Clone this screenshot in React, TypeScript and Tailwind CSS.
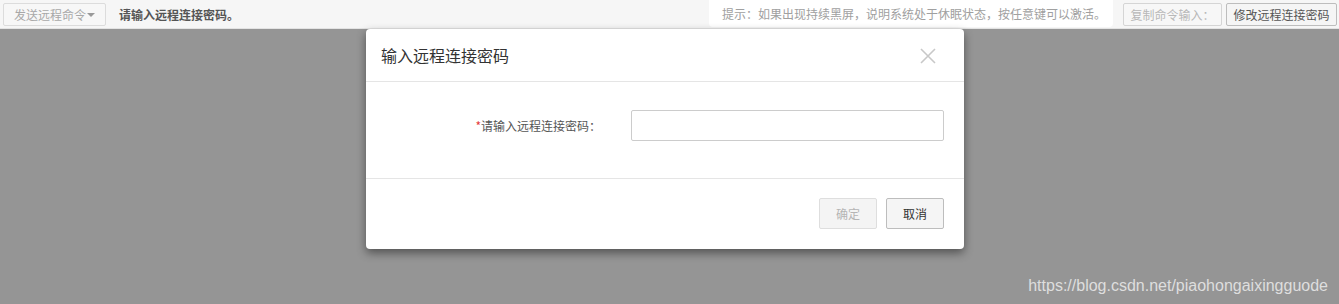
import React from "react";

const font = { fontFamily: '"Noto Sans CJK SC", "Noto Sans", sans-serif' };

export default function App() {
  return (
    <div className="relative flex h-[304px] w-full flex-col overflow-hidden bg-[#959595]" style={font}>
      <div className="flex h-[29px] items-start border-b border-[#e3e3e3] bg-[#f6f6f6]">
        <div className="ml-[3px] mt-[3px] flex h-[23px] w-[103px] items-center justify-center rounded-[2px] border border-[#dcdcdc] bg-[#f7f7f7] text-[12px] text-[#a8a8a8]">
          发送远程命令
          <span className="ml-[1px] inline-block h-0 w-0 border-x-[4px] border-t-[4px] border-x-transparent border-t-[#999]"></span>
        </div>
        <div className="ml-[13px] mt-[6px] text-[12px] font-bold leading-[17px] text-[#555]">请输入远程连接密码。</div>
        <div className="ml-auto flex h-[27px] w-[404px] items-center rounded-b-[4px] bg-white pl-[13px] text-[12px] text-[#a0a0a0]">
          提示：如果出现持续黑屏，说明系统处于休眠状态，按任意键可以激活。
        </div>
        <div className="ml-[10px] mt-[3px] flex h-[23px] w-[99px] items-center justify-center rounded-[2px] border border-[#d5d5d5] bg-[#f7f7f7] text-[12px] text-[#b8b8b8]">
          复制命令输入：
        </div>
        <div className="ml-[4px] mr-[2px] mt-[3px] flex h-[23px] w-[111px] items-center justify-center rounded-[2px] border border-[#bdbdbd] bg-[#f5f5f5] text-[12px] text-[#555]">
          修改远程连接密码
        </div>
      </div>
      <div className="flex-1"></div>

      <div className="absolute left-[366px] top-[29px] w-[598px] rounded-[4px] bg-white shadow-[0_4px_10px_rgba(0,0,0,0.45)]">
        <div className="flex h-[53px] items-center justify-between border-b border-[#e5e5e5] pl-[15px] pr-[28px]">
          <span className="text-[16px] text-[#333]">输入远程连接密码</span>
          <svg width="16" height="16" viewBox="0 0 16 16" className="mt-[1px]">
            <path d="M1 1L15 15M15 1L1 15" stroke="#c8c8c8" strokeWidth="1.6" fill="none" />
          </svg>
        </div>
        <div className="flex h-[96px] items-start pt-[28px]">
          <div className="flex h-[31px] w-[246px] items-center justify-end pr-[11px] text-[12px] text-[#555]">
            <span className="text-[#e4393c]">*</span>请输入远程连接密码：
          </div>
          <div className="ml-[19px] h-[31px] w-[313px] rounded-[2px] border border-[#cccccc] bg-white"></div>
        </div>
        <div className="flex items-center justify-end gap-[9px] border-t border-[#e5e5e5] px-[20px] pb-[20px] pt-[19px]">
          <div className="flex h-[31px] w-[58px] items-center justify-center rounded-[2px] border border-[#dedede] bg-[#f4f4f4] text-[12px] text-[#b5b5b5]">确定</div>
          <div className="flex h-[31px] w-[58px] items-center justify-center rounded-[2px] border border-[#bdbdbd] bg-[#f5f5f5] text-[12px] text-[#333]">取消</div>
        </div>
      </div>

      <div className="absolute right-[11px] top-[274px] text-[16px] text-[#dedede]" style={{ fontFamily: '"Liberation Sans", Arial, sans-serif' }}>
        https://blog.csdn.net/piaohongaixingguode
      </div>
    </div>
  );
}
